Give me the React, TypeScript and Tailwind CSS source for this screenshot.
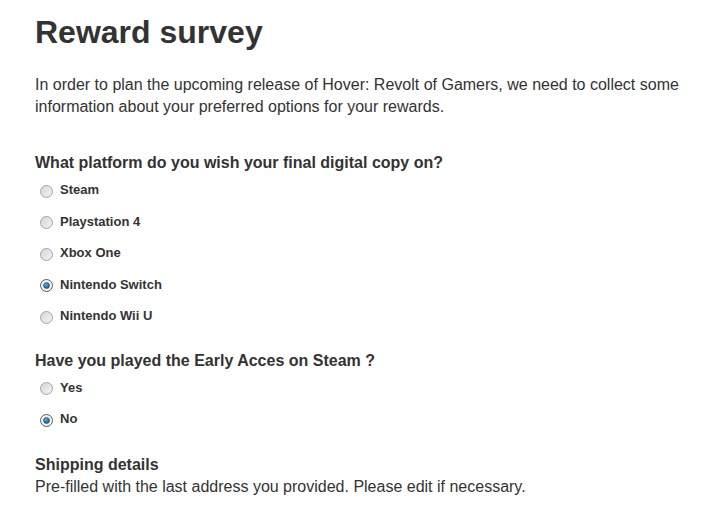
import { useState } from "react";

const PLATFORMS = ["Steam", "Playstation 4", "Xbox One", "Nintendo Switch", "Nintendo Wii U"];
const EARLY = ["Yes", "No"];

function Radio({ checked }: { checked: boolean }) {
  return (
    <svg width="13" height="13" viewBox="0 0 13 13" className="mt-[3.5px] shrink-0">
      <defs>
        <linearGradient id="rg-off" x1="0" y1="0" x2="1" y2="1">
          <stop offset="0" stopColor="#cfcfcf" />
          <stop offset="1" stopColor="#fbfbfb" />
        </linearGradient>
        <radialGradient id="rg-dot" cx="0.4" cy="0.35" r="0.7">
          <stop offset="0" stopColor="#5ab0e8" />
          <stop offset="1" stopColor="#0f4f86" />
        </radialGradient>
      </defs>
      {checked ? (
        <>
          <circle cx="6.5" cy="6.5" r="6" fill="#f4f4f4" stroke="#5a5a5a" strokeWidth="1" />
          <circle cx="6.5" cy="6.5" r="3" fill="url(#rg-dot)" stroke="#1b4a72" strokeWidth="0.6" />
        </>
      ) : (
        <>
          <circle cx="6.5" cy="6.5" r="6" fill="url(#rg-off)" stroke="#a3a3a3" strokeWidth="1" />
          <circle cx="6.5" cy="6.5" r="4.6" fill="none" stroke="#e2e2e2" strokeWidth="0.8" />
        </>
      )}
    </svg>
  );
}

function Question({
  title,
  options,
  value,
  onChange,
}: {
  title: string;
  options: string[];
  value: string;
  onChange: (v: string) => void;
}) {
  return (
    <div>
      <p className="text-[16px] leading-[22px] font-bold">{title}</p>
      <div className="mt-[7px] flex flex-col gap-[13.5px]">
        {options.map((o) => (
          <label
            key={o}
            onClick={() => onChange(o)}
            className="flex items-start gap-[7px] pl-[5px] cursor-pointer"
          >
            <Radio checked={value === o} />
            <span className="text-[13px] leading-[18px] font-bold">{o}</span>
          </label>
        ))}
      </div>
    </div>
  );
}

export default function App() {
  const [platform, setPlatform] = useState("Nintendo Switch");
  const [early, setEarly] = useState("No");

  return (
    <div className="min-h-[507px] w-[728px] bg-white px-[35px] pt-[14px] text-[#333] font-['Liberation_Sans',Arial,sans-serif]">
      <h1 className="text-[32px] leading-[36px] font-bold">Reward survey</h1>

      <p className="mt-[24px] text-[16px] leading-[22px]">
        In order to plan the upcoming release of Hover: Revolt of Gamers, we need to collect some
        information about your preferred options for your rewards.
      </p>

      <div className="mt-[34px]">
        <Question
          title="What platform do you wish your final digital copy on?"
          options={PLATFORMS}
          value={platform}
          onChange={setPlatform}
        />
      </div>

      <div className="mt-[24.5px]">
        <Question
          title="Have you played the Early Acces on Steam ?"
          options={EARLY}
          value={early}
          onChange={setEarly}
        />
      </div>

      <div className="mt-[26px]">
        <p className="text-[16px] leading-[22px] font-bold">Shipping details</p>
        <p className="text-[16px] leading-[22px]">
          Pre-filled with the last address you provided. Please edit if necessary.
        </p>
      </div>
    </div>
  );
}
